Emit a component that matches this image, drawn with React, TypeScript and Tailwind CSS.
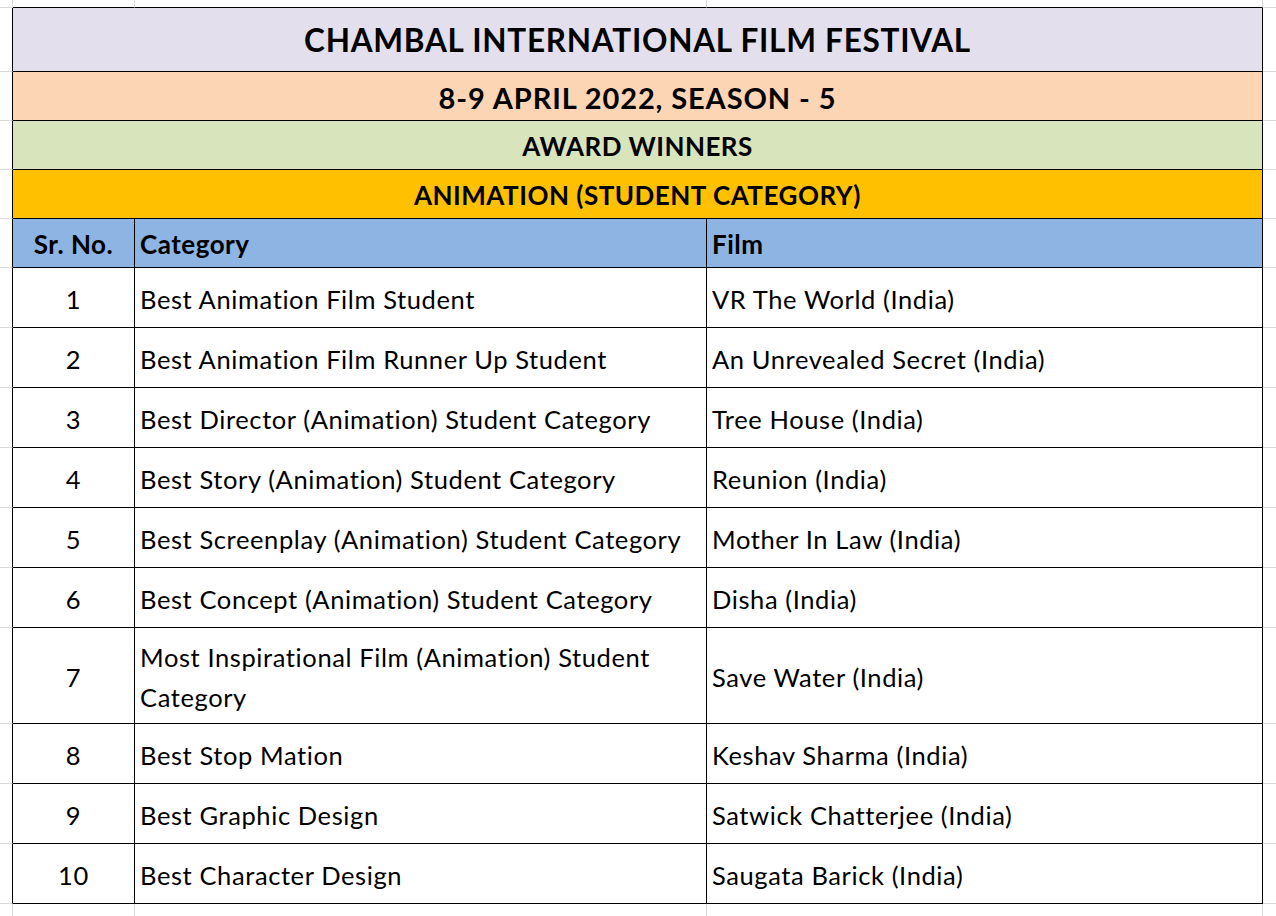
import React from "react";

const data: [string, string, string][] = [
  ["1", "Best Animation Film Student", "VR The World (India)"],
  ["2", "Best Animation Film Runner Up Student", "An Unrevealed Secret (India)"],
  ["3", "Best Director (Animation) Student Category", "Tree House (India)"],
  ["4", "Best Story (Animation) Student Category", "Reunion (India)"],
  ["5", "Best Screenplay (Animation) Student Category", "Mother In Law (India)"],
  ["6", "Best Concept (Animation) Student Category", "Disha (India)"],
  ["7", "Most Inspirational Film (Animation) Student Category", "Save Water (India)"],
  ["8", "Best Stop Mation", "Keshav Sharma (India)"],
  ["9", "Best Graphic Design", "Satwick Chatterjee (India)"],
  ["10", "Best Character Design", "Saugata Barick (India)"],
];

// margin (outside the table) cells
const gridCell = "border-r border-b border-[#d9d9d9]";
const leftEdge = "border-r border-b border-b-[#d9d9d9] border-r-black";
const topEdge = "border-r border-b border-r-[#d9d9d9] border-b-black";
const rightMargin = "border-b border-[#d9d9d9]";

const cell = "border-r border-b border-black flex items-center";
const band =
  "col-span-3 border-r border-b border-black flex items-center justify-center font-bold text-black";
const dataText = "text-[25.5px] tracking-[0.6px] leading-[40px] text-black pt-[2px]";
const headText = "text-[26px] tracking-[0.5px] font-bold text-black pt-[2px]";

export default function App() {
  return (
    <div className="w-[1276px] h-[916px] bg-white overflow-hidden font-['Lato',sans-serif]">
      <div className="grid h-[916px] w-[1276px] grid-cols-[13px_122px_572px_556px_1fr] grid-rows-[8px_64px_49px_49px_49px_49px_60px_60px_60px_60px_60px_60px_96px_60px_60px_60px_1fr]">
        {/* top margin row */}
        <div className={gridCell} />
        <div className={topEdge} />
        <div className={topEdge} />
        <div className={topEdge} />
        <div className={rightMargin} />

        {/* Title */}
        <div className={leftEdge} />
        <div className={`${band} bg-[#e4dfec] text-[31.5px] tracking-[0.75px] pt-[3px]`}>
          CHAMBAL INTERNATIONAL FILM FESTIVAL
        </div>
        <div className={rightMargin} />

        <div className={leftEdge} />
        <div className={`${band} bg-[#fcd5b4] text-[29px] tracking-[0.9px] pt-[3px]`}>
          8-9 APRIL 2022, SEASON - 5
        </div>
        <div className={rightMargin} />

        <div className={leftEdge} />
        <div className={`${band} bg-[#d8e4bc] text-[26px] tracking-[0.45px] pt-[2px]`}>
          AWARD WINNERS
        </div>
        <div className={rightMargin} />

        <div className={leftEdge} />
        <div className={`${band} bg-[#ffc000] text-[26px] tracking-[0.5px] pt-[3px]`}>
          ANIMATION (STUDENT CATEGORY)
        </div>
        <div className={rightMargin} />

        {/* Header */}
        <div className={leftEdge} />
        <div className={`${cell} bg-[#8db4e2] justify-center`}>
          <span className={headText}>Sr. No.</span>
        </div>
        <div className={`${cell} bg-[#8db4e2] pl-[5px]`}>
          <span className={headText}>Category</span>
        </div>
        <div className={`${cell} bg-[#8db4e2] pl-[5px]`}>
          <span className={headText}>Film</span>
        </div>
        <div className={rightMargin} />

        {/* Data rows */}
        {data.map(([no, cat, film]) => (
          <React.Fragment key={no}>
            <div className={leftEdge} />
            <div className={`${cell} justify-center`}>
              <span className={dataText}>{no}</span>
            </div>
            <div className={`${cell} pl-[5px] pr-[8px]`}>
              <span className={dataText}>{cat}</span>
            </div>
            <div className={`${cell} pl-[5px]`}>
              <span className={dataText}>{film}</span>
            </div>
            <div className={rightMargin} />
          </React.Fragment>
        ))}

        {/* bottom margin row */}
        <div className="border-r border-[#d9d9d9]" />
        <div className="border-r border-[#d9d9d9]" />
        <div className="border-r border-[#d9d9d9]" />
        <div className="border-r border-[#d9d9d9]" />
        <div />
      </div>
    </div>
  );
}
